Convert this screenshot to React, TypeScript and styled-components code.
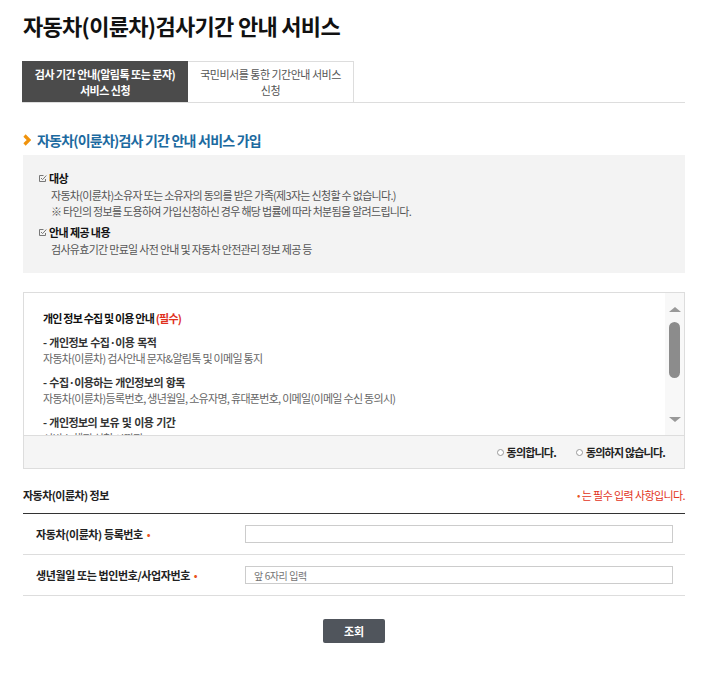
import React from "react";
import styled, { createGlobalStyle } from "styled-components";

//#region STYLES
const GlobalStyle = createGlobalStyle`
  body {
    margin: 0;
    background: #fff;
    font-family: "Noto Sans CJK KR", "Noto Sans", sans-serif;
    color: #333;
  }
`;
const Page = styled.div`
  width: 662px;
  margin-left: 23px;
  padding-bottom: 40px;
`;
const Title = styled.h1`
  margin: 10px 0 0;
  font-size: 22px;
  line-height: 30px;
  font-weight: 700;
  letter-spacing: -0.7px;
  color: #111;
`;
const TabList = styled.div`
  display: flex;
  margin: 21px 0 0 -1px;
  border-bottom: 1px solid #ddd;
`;
const Tab = styled.div<{ $active?: boolean }>`
  box-sizing: border-box;
  display: flex;
  align-items: center;
  justify-content: center;
  width: 166px;
  height: 41px;
  font-size: 11px;
  line-height: 16px;
  letter-spacing: -0.5px;
  text-align: center;
  font-weight: ${(p) => (p.$active ? 700 : 400)};
  color: ${(p) => (p.$active ? "#fff" : "#555")};
  background: ${(p) => (p.$active ? "#4b4b4b" : "#fff")};
  border: ${(p) => (p.$active ? "none" : "1px solid #ddd")};
  border-bottom: none;
  border-left: none;
`;
const SectionTitle = styled.h2`
  display: flex;
  align-items: center;
  gap: 6px;
  margin: 27px 0 0;
  font-size: 14px;
  line-height: 20px;
  font-weight: 700;
  letter-spacing: -0.8px;
  color: #1c6aa0;
`;
const InfoBox = styled.div`
  margin-top: 5px;
  padding: 14px 15px 16px;
  background: #f3f3f3;
`;
const InfoGroup = styled.div`
  & + & {
    margin-top: 4px;
  }
`;
const InfoTitle = styled.div`
  display: flex;
  align-items: center;
  gap: 2px;
  font-size: 11px;
  line-height: 18px;
  font-weight: 700;
  letter-spacing: -0.6px;
  color: #111;
`;
const InfoText = styled.p`
  margin: 0 0 0 13px;
  font-size: 11px;
  line-height: 16px;
  letter-spacing: -0.7px;
  color: #555;
`;
const AgreeBox = styled.div`
  margin-top: 19px;
  border: 1px solid #ddd;
`;
const AgreeBody = styled.div`
  display: flex;
  height: 142px;
  border-bottom: 1px solid #ddd;
`;
const AgreeScroll = styled.div`
  flex: 1;
  overflow: hidden;
  padding: 17px 20px 0 19px;
`;
const AgreeHeading = styled.div`
  font-size: 11px;
  line-height: 16px;
  font-weight: 700;
  letter-spacing: -0.8px;
  color: #111;
`;
const Required = styled.span`
  color: #e0301e;
`;
const Item = styled.div`
  margin-top: 8px;
  font-size: 11px;
  line-height: 16px;
  letter-spacing: -0.7px;
`;
const ItemTitle = styled.div`
  font-weight: 700;
  letter-spacing: -0.6px;
  word-spacing: 1px;
  color: #333;
`;
const ItemText = styled.div`
  color: #666;
`;
const Scrollbar = styled.div`
  display: flex;
  flex-direction: column;
  align-items: center;
  width: 19px;
  padding: 14px 0 13px;
  box-sizing: border-box;
  background: #f8f8f8;
`;
const Arrow = styled.span<{ $down?: boolean }>`
  width: 0;
  height: 0;
  border-left: 6.5px solid transparent;
  border-right: 6.5px solid transparent;
  ${(p) =>
    p.$down ? "border-top: 5px solid #999;" : "border-bottom: 5px solid #999;"}
  margin-top: ${(p) => (p.$down ? "auto" : "0")};
`;
const Thumb = styled.span`
  width: 11px;
  height: 56px;
  margin-top: 10px;
  border-radius: 6px;
  background: #8c8c8c;
`;
const AgreeBar = styled.div`
  display: flex;
  justify-content: flex-end;
  align-items: center;
  gap: 20px;
  height: 32px;
  padding-right: 19px;
  background: #f5f5f5;
`;
const RadioLabel = styled.label`
  display: flex;
  align-items: center;
  gap: 3px;
  font-size: 11px;
  font-weight: 700;
  letter-spacing: -0.8px;
  color: #222;
`;
const Radio = styled.input`
  appearance: none;
  width: 7px;
  height: 7px;
  margin: 0;
  border: 1px solid #999;
  border-radius: 50%;
  background: #fff;
`;
const FormHeader = styled.div`
  box-sizing: border-box;
  display: flex;
  justify-content: space-between;
  align-items: center;
  height: 29px;
  margin-top: 16px;
  padding-bottom: 8px;
  border-bottom: 1px solid #333;
`;
const FormTitle = styled.h3`
  margin: 0;
  font-size: 11px;
  line-height: 20px;
  font-weight: 700;
  letter-spacing: -0.55px;
  color: #222;
`;
const RequiredNote = styled.span`
  font-size: 11px;
  line-height: 20px;
  letter-spacing: -0.6px;
  color: #e2341c;
`;
const Dot = styled.span`
  margin-left: 4px;
  font-size: 10px;
  vertical-align: 1px;
  color: #e8541e;
`;
const FormRow = styled.div`
  display: grid;
  grid-template-columns: 222px 1fr;
  align-items: center;
  height: 40px;
  border-bottom: 1px solid #ddd;
`;
const FieldLabel = styled.label`
  padding-left: 13px;
  font-size: 11px;
  font-weight: 700;
  letter-spacing: -0.4px;
  color: #222;
`;
const TextInput = styled.input`
  box-sizing: border-box;
  width: 428px;
  height: 18px;
  padding: 0 8px;
  border: 1px solid #ccc;
  font-family: inherit;
  font-size: 10px;
  letter-spacing: -0.4px;
  color: #333;

  ::placeholder {
    color: #888;
  }
`;
const ButtonRow = styled.div`
  display: flex;
  justify-content: center;
  margin-top: 23px;
`;
const SearchButton = styled.button`
  width: 62px;
  height: 24px;
  border: none;
  border-radius: 2px;
  background: #50555c;
  color: #fff;
  font-family: inherit;
  font-size: 11px;
  font-weight: 700;
`;
//#endregion

const Chevron = () => (
  <svg width="8" height="12" viewBox="0 0 8 12">
    <path d="M1.5 1.5 L6 6 L1.5 10.5" fill="none" stroke="#f0930c" strokeWidth="3.2" />
  </svg>
);

const CheckIcon = () => (
  <svg width="9" height="9" viewBox="0 0 9 9">
    <path d="M5.5 1.5 H1.5 V7.5 H7.5 V5" fill="none" stroke="#777" strokeWidth="1" />
    <path d="M3 4 L4.6 5.6 L8.3 1.5" fill="none" stroke="#777" strokeWidth="1" />
  </svg>
);

const App = () => {
  return (
    <Page>
      <GlobalStyle />
      <Title>자동차(이륜차)검사기간 안내 서비스</Title>

      <TabList>
        <Tab $active>
          검사 기간 안내(알림톡 또는 문자)
          <br />
          서비스 신청
        </Tab>
        <Tab>
          국민비서를 통한 기간안내 서비스
          <br />
          신청
        </Tab>
      </TabList>

      <SectionTitle>
        <Chevron />
        자동차(이륜차)검사 기간 안내 서비스 가입
      </SectionTitle>

      <InfoBox>
        <InfoGroup>
          <InfoTitle>
            <CheckIcon />
            대상
          </InfoTitle>
          <InfoText>자동차(이륜차)소유자 또는 소유자의 동의를 받은 가족(제3자는 신청할 수 없습니다.)</InfoText>
          <InfoText>※ 타인의 정보를 도용하여 가입신청하신 경우 해당 법률에 따라 처분됨을 알려드립니다.</InfoText>
        </InfoGroup>
        <InfoGroup>
          <InfoTitle>
            <CheckIcon />
            안내 제공 내용
          </InfoTitle>
          <InfoText>검사유효기간 만료일 사전 안내 및 자동차 안전관리 정보 제공 등</InfoText>
        </InfoGroup>
      </InfoBox>

      <AgreeBox>
        <AgreeBody>
          <AgreeScroll>
            <AgreeHeading>
              개인 정보 수집 및 이용 안내 <Required>(필수)</Required>
            </AgreeHeading>
            <Item>
              <ItemTitle>- 개인정보 수집·이용 목적</ItemTitle>
              <ItemText>자동차(이륜차) 검사안내 문자&amp;알림톡 및 이메일 통지</ItemText>
            </Item>
            <Item>
              <ItemTitle>- 수집·이용하는 개인정보의 항목</ItemTitle>
              <ItemText>자동차(이륜차)등록번호, 생년월일, 소유자명, 휴대폰번호, 이메일(이메일 수신 동의시)</ItemText>
            </Item>
            <Item>
              <ItemTitle>- 개인정보의 보유 및 이용 기간</ItemTitle>
              <ItemText>서비스 해지 신청 시까지</ItemText>
            </Item>
          </AgreeScroll>
          <Scrollbar>
            <Arrow />
            <Thumb />
            <Arrow $down />
          </Scrollbar>
        </AgreeBody>
        <AgreeBar>
          <RadioLabel>
            <Radio type="radio" name="agree" />
            동의합니다.
          </RadioLabel>
          <RadioLabel>
            <Radio type="radio" name="agree" />
            동의하지 않습니다.
          </RadioLabel>
        </AgreeBar>
      </AgreeBox>

      <FormHeader>
        <FormTitle>자동차(이륜차) 정보</FormTitle>
        <RequiredNote>
          <Dot>•</Dot> 는 필수 입력 사항입니다.
        </RequiredNote>
      </FormHeader>
      <FormRow>
        <FieldLabel htmlFor="carNo">
          자동차(이륜차) 등록번호<Dot>•</Dot>
        </FieldLabel>
        <TextInput id="carNo" type="text" />
      </FormRow>
      <FormRow>
        <FieldLabel htmlFor="birth">
          생년월일 또는 법인번호/사업자번호<Dot>•</Dot>
        </FieldLabel>
        <TextInput id="birth" type="text" placeholder="앞 6자리 입력" />
      </FormRow>

      <ButtonRow>
        <SearchButton type="button">조회</SearchButton>
      </ButtonRow>
    </Page>
  );
};

export default App;
